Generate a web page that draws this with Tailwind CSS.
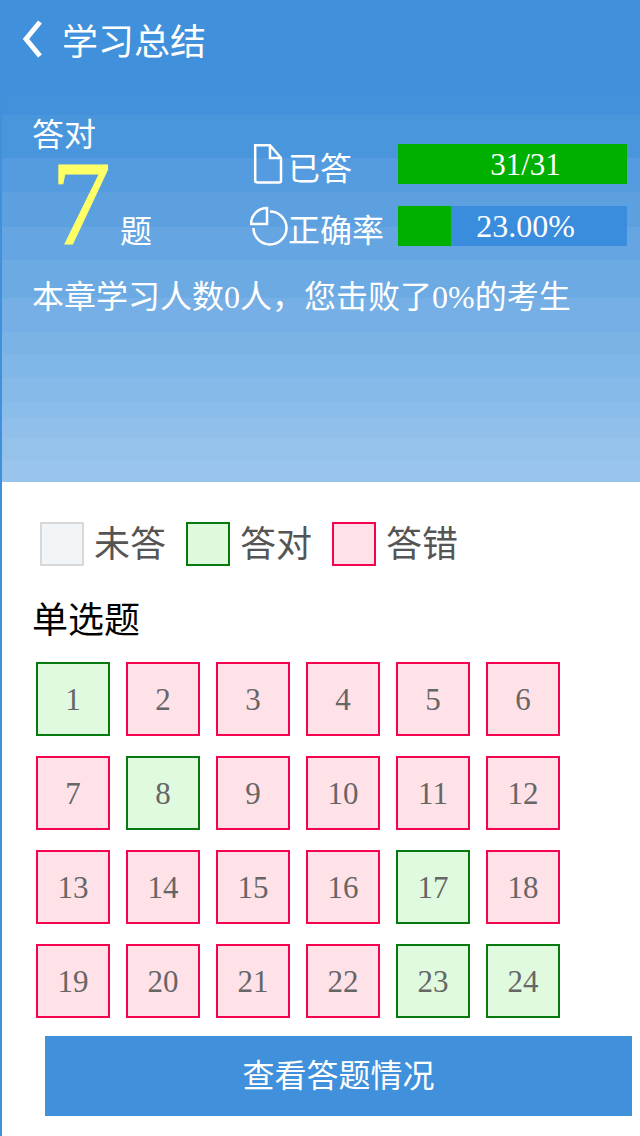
<!DOCTYPE html>
<html lang="zh-CN">
<head>
  <meta charset="UTF-8" />
  <meta name="viewport" content="width=device-width, initial-scale=1.0"/>
  <title>学习总结</title>
  <script src="https://cdn.jsdelivr.net/npm/@tailwindcss/browser@4"></script>
</head>
<body class="bg-white font-['Liberation_Serif','Noto_Sans_CJK_SC',sans-serif]">
  <div class="w-[640px] h-[1136px] overflow-hidden border-l-2 border-[#4090dc] flex flex-col">

    <!-- header -->
    <div class="-ml-[2px] h-[96px] shrink-0 bg-[#4090db] flex items-center pl-[22px] pb-[18px] text-white">
      <svg width="22" height="38" viewBox="0 0 22 38" fill="none" stroke="white" stroke-width="5">
        <path d="M18 2 L4 19 L18 36"/>
      </svg>
      <span class="ml-[18px] text-[36px] leading-none font-['Noto_Sans_CJK_SC',sans-serif]">学习总结</span>
    </div>

    <!-- summary, stepped like the banded gradient in the shot -->
    <div class="h-[386px] shrink-0 bg-[linear-gradient(#4391db_0_19px,#4a96dd_19px_62px,#549bdf_62px_96px,#5ca0e0_96px_131px,#64a5e2_131px_164px,#6caae4_164px_202px,#75afe5_202px_236px,#7bb3e7_236px_259px,#81b6e8_259px_282px,#86bae9_282px_306px,#8bbdea_306px_322px,#8fbfea_322px_342px,#94c2eb_342px_364px,#99c5ec_364px)] text-white pl-[30px] pt-[20px]">
      <div class="flex">
        <div class="w-[218px] shrink-0">
          <div class="mt-[1px] text-[32px] leading-[36px]">答对</div>
          <div class="flex items-end h-[93px]">
            <span class="ml-[19px] w-[69px] text-[#ffff66] text-[120px] leading-[84px] [-webkit-text-stroke:1px_#ffff66]">7</span>
            <span class="text-[32px] leading-[36px] -mb-[4px]">题</span>
          </div>
        </div>
        <div class="flex flex-col gap-[22px] pt-[28px]">
          <div class="flex items-center h-[40px]">
            <svg class="w-[38px] h-[40px] shrink-0" viewBox="0 0 38 40" fill="none" stroke="white" stroke-width="2.500">
              <path d="M5.200 1.200 H20 L31 14 V36.500 Q31 38.500 29 38.500 H7.200 Q5.200 38.500 5.200 36.500 Z M20 1.200 V14 H31"/>
            </svg>
            <span class="mt-[10px] text-[32px] leading-[36px] w-[110px]">已答</span>
            <div class="w-[229px] h-[40px] bg-[#00b000] flex items-center justify-center pl-[26px] text-[31px] leading-none">31/31</div>
          </div>
          <div class="flex items-center h-[40px]">
            <svg class="w-[38px] h-[40px] shrink-0" viewBox="0 0 38 40" fill="none" stroke="white" stroke-width="2.500">
              <path d="M20 5.500 A16.500 16.500 0 1 1 3.500 22"/>
              <path d="M17 2 V18 H1 A16 16 0 0 1 17 2 Z"/>
            </svg>
            <span class="mt-[10px] text-[32px] leading-[36px] w-[110px]">正确率</span>
            <div class="relative w-[229px] h-[40px] bg-[#3a8cdc] flex items-center justify-center pl-[26px] text-[32px] leading-none">
              <div class="absolute left-0 top-0 h-full w-[53px] bg-[#00b000]"></div>
              <span class="relative">23.00%</span>
            </div>
          </div>
        </div>
      </div>
      <p class="mt-[31px] text-[32px] leading-[40px]">本章学习人数0人，您击败了0%的考生</p>
    </div>

    <!-- answers -->
    <div class="flex-1 bg-white pt-[40px]">
      <div class="flex items-center h-[44px] pl-[38px] text-[36px] leading-[44px] text-[#555]">
        <span class="w-[44px] h-[44px] border-2 border-[#d8d8d8] bg-[#f2f5f8]"></span>
        <span class="ml-[10px] pt-[2px] w-[92px]">未答</span>
        <span class="w-[44px] h-[44px] border-2 border-[#067a0e] bg-[#dff9de]"></span>
        <span class="ml-[10px] pt-[2px] w-[92px]">答对</span>
        <span class="w-[44px] h-[44px] border-2 border-[#f5034f] bg-[#ffe1e8]"></span>
        <span class="ml-[10px] pt-[2px]">答错</span>
      </div>
      <div class="mt-[30px] pl-[30px] text-[36px] leading-[50px] text-black">单选题</div>
      <div class="mt-[16px] ml-[34px] grid grid-cols-[repeat(6,74px)] gap-x-[16px] gap-y-[20px] text-[31px] text-[#666] [&>div]:pt-[2px]">
        <div class="h-[74px] flex items-center justify-center border-2 border-[#067a0e] bg-[#e0fae0]">1</div>
        <div class="h-[74px] flex items-center justify-center border-2 border-[#f5034f] bg-[#ffe1e8]">2</div>
        <div class="h-[74px] flex items-center justify-center border-2 border-[#f5034f] bg-[#ffe1e8]">3</div>
        <div class="h-[74px] flex items-center justify-center border-2 border-[#f5034f] bg-[#ffe1e8]">4</div>
        <div class="h-[74px] flex items-center justify-center border-2 border-[#f5034f] bg-[#ffe1e8]">5</div>
        <div class="h-[74px] flex items-center justify-center border-2 border-[#f5034f] bg-[#ffe1e8]">6</div>
        <div class="h-[74px] flex items-center justify-center border-2 border-[#f5034f] bg-[#ffe1e8]">7</div>
        <div class="h-[74px] flex items-center justify-center border-2 border-[#067a0e] bg-[#e0fae0]">8</div>
        <div class="h-[74px] flex items-center justify-center border-2 border-[#f5034f] bg-[#ffe1e8]">9</div>
        <div class="h-[74px] flex items-center justify-center border-2 border-[#f5034f] bg-[#ffe1e8]">10</div>
        <div class="h-[74px] flex items-center justify-center border-2 border-[#f5034f] bg-[#ffe1e8]">11</div>
        <div class="h-[74px] flex items-center justify-center border-2 border-[#f5034f] bg-[#ffe1e8]">12</div>
        <div class="h-[74px] flex items-center justify-center border-2 border-[#f5034f] bg-[#ffe1e8]">13</div>
        <div class="h-[74px] flex items-center justify-center border-2 border-[#f5034f] bg-[#ffe1e8]">14</div>
        <div class="h-[74px] flex items-center justify-center border-2 border-[#f5034f] bg-[#ffe1e8]">15</div>
        <div class="h-[74px] flex items-center justify-center border-2 border-[#f5034f] bg-[#ffe1e8]">16</div>
        <div class="h-[74px] flex items-center justify-center border-2 border-[#067a0e] bg-[#e0fae0]">17</div>
        <div class="h-[74px] flex items-center justify-center border-2 border-[#f5034f] bg-[#ffe1e8]">18</div>
        <div class="h-[74px] flex items-center justify-center border-2 border-[#f5034f] bg-[#ffe1e8]">19</div>
        <div class="h-[74px] flex items-center justify-center border-2 border-[#f5034f] bg-[#ffe1e8]">20</div>
        <div class="h-[74px] flex items-center justify-center border-2 border-[#f5034f] bg-[#ffe1e8]">21</div>
        <div class="h-[74px] flex items-center justify-center border-2 border-[#f5034f] bg-[#ffe1e8]">22</div>
        <div class="h-[74px] flex items-center justify-center border-2 border-[#067a0e] bg-[#e0fae0]">23</div>
        <div class="h-[74px] flex items-center justify-center border-2 border-[#067a0e] bg-[#e0fae0]">24</div>
      </div>
      <button class="mt-[18px] ml-[43px] w-[587px] h-[80px] bg-[#4090db] text-white text-[32px]">查看答题情况</button>
    </div>
  </div>
</body>
</html>
